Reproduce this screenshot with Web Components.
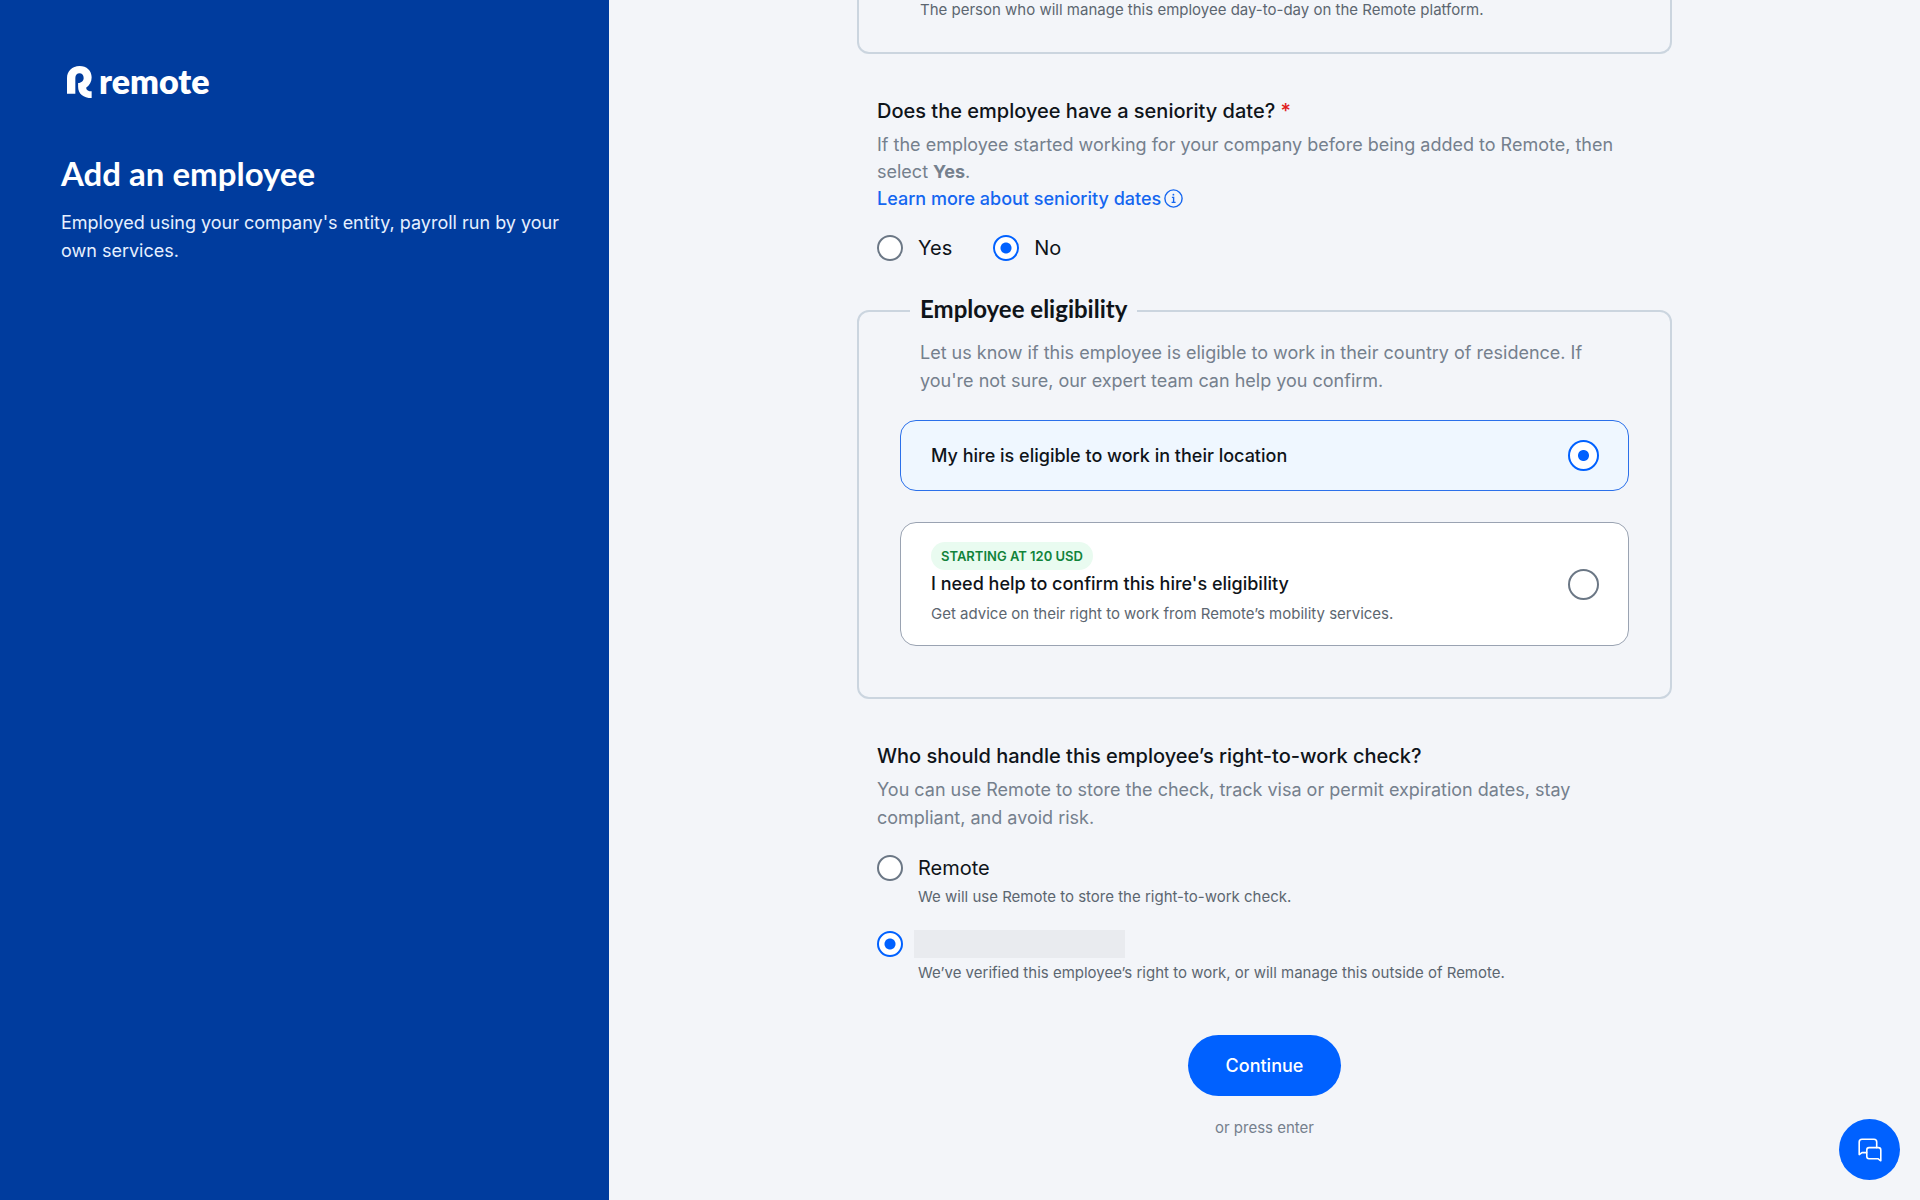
<!DOCTYPE html>
<html lang="en">
<head>
<meta charset="utf-8">
<meta name="viewport" content="width=device-width, initial-scale=1">
<title>Add an employee</title>
<style>
    body {
        margin: 0;
        background: #f3f5f9;
        color: #0f1419;
        font-family: Inter, "Liberation Sans", sans-serif;
        --brand: #0061ff;
        --navy: #003c9e;
        --muted: #75808d;
        --help: #5c6670;
        --line: #cbd5df;
    }
</style>
</head>
<body>
<app-shell>
    <side-intro slot="side" heading="Add an employee">
        Employed using your company's entity, payroll run by your own services.
    </side-intro>

    <form-section continued>
        <help-text inset>The person who will manage this employee day-to-day on the Remote platform.</help-text>
    </form-section>

    <form-question heading="Does the employee have a seniority date?" required>
        <span slot="description">If the employee started working for your company before being added to Remote, then select <b>Yes</b>.</span>
        <info-link slot="link" href="#seniority">Learn more about seniority dates</info-link>
        <radio-set inline>
            <radio-option name="seniority" value="yes" label="Yes"></radio-option>
            <radio-option name="seniority" value="no" label="No" checked></radio-option>
        </radio-set>
    </form-question>

    <form-section heading="Employee eligibility">
        <span slot="description">Let us know if this employee is eligible to work in their country of residence. If you're not sure, our expert team can help you confirm.</span>
        <radio-set cards>
            <option-card name="eligibility" value="eligible" label="My hire is eligible to work in their location" checked></option-card>
            <option-card name="eligibility" value="help" label="I need help to confirm this hire's eligibility" badge="STARTING AT 120 USD">Get advice on their right to work from Remote’s mobility services.</option-card>
        </radio-set>
    </form-section>

    <form-question heading="Who should handle this employee’s right-to-work check?" roomy>
        <span slot="description">You can use Remote to store the check, track visa or permit expiration dates, stay compliant, and avoid risk.</span>
        <radio-set>
            <radio-option name="check" value="remote" label="Remote">We will use Remote to store the right-to-work check.</radio-option>
            <radio-option name="check" value="company" checked>We’ve verified this employee’s right to work, or will manage this outside of Remote.</radio-option>
        </radio-set>
    </form-question>

    <form-submit slot="footer" hint="or press enter">Continue</form-submit>
</app-shell>
<chat-launcher></chat-launcher>

<script>
class AppShell extends HTMLElement {
    constructor() {
        super();
        this.attachShadow({ mode: 'open' }).innerHTML = `
            <style>
                :host {
                    display: grid;
                    grid-template-columns: minmax(0, 609fr) minmax(0, 1311fr);
                    min-height: 100vh;
                }
                main {
                    display: flex;
                    justify-content: center;
                }
                form {
                    display: flex;
                    flex-direction: column;
                    width: 100%;
                    max-width: 815px;
                }
            </style>
            <slot name="side"></slot>
            <main>
                <form>
                    <slot></slot>
                    <slot name="footer"></slot>
                </form>
            </main>
        `;
    }
}

class RemoteLogo extends HTMLElement {
    constructor() {
        super();
        this.attachShadow({ mode: 'open' }).innerHTML = `
            <style>
                :host {
                    display: flex;
                    align-items: flex-start;
                    gap: 7px;
                    font: 800 34px/30px Lato, sans-serif;
                }
                svg {
                    display: block;
                    fill: currentColor;
                }
            </style>
            <svg width="25" height="32" viewBox="0 0 72 96" preserveAspectRatio="none" aria-hidden="true">
                <path d="M0 83V36C0 15 15 0 36 0S71 14 71 34C71 48 65 58 55 65C56 73 62 76 71 76V96C47 96 32 83 32 62V51C42 51 48 44 48 36C48 28 43 22 36 22S24 28 24 36V83Z"/>
            </svg>
            <span>remote</span>
        `;
    }
}

class SideIntro extends HTMLElement {
    constructor() {
        super();
        this.$shadow = this.attachShadow({ mode: 'open' });
    }

    connectedCallback() {
        this.$shadow.innerHTML = `
            <style>
                :host {
                    display: block;
                    background: var(--navy);
                    color: #fff;
                    padding: 66px 40px 0 61px;
                }
                remote-logo {
                    padding-left: 6px;
                }
                h1 {
                    margin: 55px 0 16px;
                    font: 700 33px/40px Lato, sans-serif;
                }
                p {
                    margin: 0;
                    font-size: 18px;
                    line-height: 28px;
                    color: #e6f0ff;
                }
            </style>
            <remote-logo></remote-logo>
            <h1>${this.getAttribute('heading')}</h1>
            <p><slot></slot></p>
        `;
    }
}

class HelpText extends HTMLElement {
    constructor() {
        super();
        this.attachShadow({ mode: 'open' }).innerHTML = `
            <style>
                :host {
                    display: block;
                    color: var(--help);
                    font-size: 15px;
                    line-height: 24px;
                }
                :host([inset]) {
                    padding: 0 20px;
                    line-height: 20px;
                }
            </style>
            <slot></slot>
        `;
    }
}

class FormSection extends HTMLElement {
    constructor() {
        super();
        this.$shadow = this.attachShadow({ mode: 'open' });
    }

    connectedCallback() {
        const heading = this.getAttribute('heading');
        this.$shadow.innerHTML = `
            <style>
                :host {
                    display: block;
                }
                fieldset {
                    margin: 0;
                    min-width: 0;
                    border: 2px solid var(--line);
                    border-radius: 12px;
                    padding: 14px 41px 51px;
                }
                :host([continued]) fieldset {
                    border-top: 0;
                    border-radius: 0 0 12px 12px;
                    padding-top: 0;
                    padding-bottom: 32px;
                }
                legend {
                    margin-left: 10px;
                    padding: 0 10px 4px;
                    font: 700 24px/24px Lato, sans-serif;
                }
                p {
                    margin: 0 0 25px;
                    padding: 0 20px;
                    color: var(--muted);
                    font-size: 18px;
                    line-height: 28px;
                }
            </style>
            <fieldset>
                ${heading ? `<legend>${heading}</legend><p><slot name="description"></slot></p>` : ''}
                <slot></slot>
            </fieldset>
        `;
    }
}

class FormQuestion extends HTMLElement {
    constructor() {
        super();
        this.$shadow = this.attachShadow({ mode: 'open' });
    }

    connectedCallback() {
        this.$shadow.innerHTML = `
            <style>
                :host {
                    display: block;
                    padding: 43px 20px 36px;
                }
                h2 {
                    margin: 0;
                    font-size: 20px;
                    font-weight: 500;
                    line-height: 28px;
                }
                .star {
                    color: #e02020;
                }
                .about {
                    margin: 6px 0 23px;
                    color: var(--muted);
                    font-size: 18px;
                    line-height: 27px;
                }
                :host([roomy]) .about {
                    line-height: 28px;
                }
                ::slotted([slot="description"]) {
                    display: block;
                }
            </style>
            <section role="group" aria-labelledby="title">
                <h2 id="title">${this.getAttribute('heading')}${this.hasAttribute('required') ? ' <span class="star">*</span>' : ''}</h2>
                <div class="about">
                    <slot name="description"></slot>
                    <slot name="link"></slot>
                </div>
                <slot></slot>
            </section>
        `;
    }
}

class InfoLink extends HTMLElement {
    constructor() {
        super();
        this.$shadow = this.attachShadow({ mode: 'open' });
    }

    connectedCallback() {
        this.$shadow.innerHTML = `
            <style>
                :host {
                    display: flex;
                }
                a {
                    display: flex;
                    align-items: center;
                    gap: 3px;
                    color: #1466f0;
                    font-weight: 500;
                    text-decoration: none;
                }
                a:hover {
                    text-decoration: underline;
                }
            </style>
            <a href="${this.getAttribute('href')}">
                <slot></slot>
                <svg width="19" height="19" viewBox="0 0 19 19" fill="none" stroke="currentColor" stroke-width="1.4" aria-hidden="true">
                    <circle cx="9.5" cy="9.5" r="8.6"/>
                    <path d="M7.9 8.4h1.7v4.9M7.6 13.4h4"/>
                    <circle cx="9.4" cy="5.7" r=".9" fill="currentColor" stroke="none"/>
                </svg>
            </a>
        `;
    }
}

// Radios in separate shadow roots do not form a native group,
// so the set clears the others when one is picked.
class RadioSet extends HTMLElement {
    constructor() {
        super();
        this.attachShadow({ mode: 'open' }).innerHTML = `
            <style>
                :host {
                    display: flex;
                    flex-direction: column;
                    gap: 22px;
                }
                :host([inline]) {
                    flex-direction: row;
                    gap: 41px;
                }
                :host([cards]) {
                    gap: 31px;
                }
            </style>
            <slot></slot>
        `;
        this.addEventListener('pick', (event) => {
            for (const item of this.children) {
                item.checked = item === event.target;
            }
        });
    }
}

const radioStyle = `
    input {
        appearance: none;
        flex: none;
        box-sizing: border-box;
        width: var(--size, 26px);
        height: var(--size, 26px);
        margin: 0;
        border: 2px solid #6b7785;
        border-radius: 50%;
        background: #fff;
    }
    input:checked {
        border-color: var(--brand);
        background: radial-gradient(circle, var(--brand) 5px, #fff 6px);
    }
`;

class RadioItem extends HTMLElement {
    constructor() {
        super();
        this.$shadow = this.attachShadow({ mode: 'open' });
    }

    connectedCallback() {
        this.render();
        this.$input = this.$shadow.querySelector('input');
        this.$input.addEventListener('change', () => {
            this.dispatchEvent(new CustomEvent('pick', { bubbles: true }));
        });
    }

    set checked(value) {
        this.$input.checked = value;
        this.toggleAttribute('checked', value);
    }

    input() {
        return `<input type="radio" id="radio" name="${this.getAttribute('name')}" value="${this.getAttribute('value')}"${this.hasAttribute('checked') ? ' checked' : ''}>`;
    }
}

class RadioOption extends RadioItem {
    render() {
        const label = this.getAttribute('label');
        const help = this.textContent.trim();
        this.$shadow.innerHTML = `
            <style>
                ${radioStyle}
                :host {
                    display: block;
                }
                .row {
                    display: flex;
                    align-items: center;
                    gap: 15px;
                }
                label {
                    font-size: 20px;
                    line-height: 26px;
                }
                .blank {
                    width: 211px;
                    height: 28px;
                    margin: -1px 0 -1px -4px;
                    background: #e9ebef;
                }
                help-text {
                    margin: 4px 0 0 41px;
                }
            </style>
            <div class="row">
                ${this.input()}
                <label for="radio"${label ? '' : ' class="blank" aria-label="Your company"'}>${label || ''}</label>
            </div>
            ${help ? '<help-text><slot></slot></help-text>' : ''}
        `;
    }
}

class OptionCard extends RadioItem {
    render() {
        const badge = this.getAttribute('badge');
        const help = this.textContent.trim();
        this.$shadow.innerHTML = `
            <style>
                ${radioStyle}
                :host {
                    display: block;
                    --size: 31px;
                }
                label {
                    display: flex;
                    align-items: center;
                    justify-content: space-between;
                    gap: 20px;
                    padding: 19px 29px 19px 30px;
                    border: 1px solid #9aa3b2;
                    border-radius: 16px;
                    background: #fff;
                }
                :host([checked]) label {
                    border-color: #2b70ea;
                    background: #eff7ff;
                }
                .text {
                    display: flex;
                    flex-direction: column;
                    align-items: flex-start;
                }
                .badge {
                    padding: 0 10px;
                    border-radius: 14px;
                    background: #e9fbf0;
                    color: #11833a;
                    font-size: 13px;
                    font-weight: 600;
                    line-height: 28px;
                }
                .title {
                    font-size: 18px;
                    font-weight: 500;
                    line-height: 28px;
                }
                help-text {
                    margin-top: 4px;
                }
            </style>
            <label for="radio">
                <span class="text">
                    ${badge ? `<span class="badge">${badge}</span>` : ''}
                    <span class="title">${this.getAttribute('label')}</span>
                    ${help ? '<help-text><slot></slot></help-text>' : ''}
                </span>
                ${this.input()}
            </label>
        `;
    }
}

class FormSubmit extends HTMLElement {
    constructor() {
        super();
        this.$shadow = this.attachShadow({ mode: 'open' });
    }

    connectedCallback() {
        this.$shadow.innerHTML = `
            <style>
                :host {
                    display: flex;
                    flex-direction: column;
                    align-items: center;
                    gap: 22px;
                    padding: 14px 20px 40px;
                }
                button {
                    padding: 16px 38px;
                    border: 0;
                    border-radius: 31px;
                    background: var(--brand);
                    color: #fff;
                    font: 500 18px/29px Inter, sans-serif;
                    cursor: pointer;
                }
                span {
                    color: var(--muted);
                    font-size: 15px;
                    line-height: 20px;
                }
            </style>
            <button type="submit"><slot></slot></button>
            <span>${this.getAttribute('hint')}</span>
        `;
    }
}

class ChatLauncher extends HTMLElement {
    constructor() {
        super();
        this.attachShadow({ mode: 'open' }).innerHTML = `
            <style>
                :host {
                    position: fixed;
                    right: 20px;
                    bottom: 20px;
                }
                button {
                    display: grid;
                    place-items: center;
                    width: 61px;
                    height: 61px;
                    padding: 0;
                    border: 0;
                    border-radius: 50%;
                    background: var(--brand);
                    color: #fff;
                    cursor: pointer;
                }
            </style>
            <button type="button" aria-label="Open chat">
                <svg width="24" height="24" viewBox="0 0 24 24" fill="none" stroke="currentColor" stroke-width="1.6" stroke-linejoin="round" stroke-linecap="round" aria-hidden="true">
                    <path d="M18.7 9.6V4Q18.7 1.2 16 1.2H4Q1.2 1.2 1.2 4V16.6L4 14.6H8.6"/>
                    <path d="M11 9.6H20.4Q22.8 9.6 22.8 12V22.8L20.2 20.8H11Q8.8 20.8 8.8 18.6V12Q8.8 9.6 11 9.6Z"/>
                </svg>
            </button>
        `;
    }
}

window.customElements.define('help-text', HelpText);
window.customElements.define('remote-logo', RemoteLogo);
window.customElements.define('side-intro', SideIntro);
window.customElements.define('form-section', FormSection);
window.customElements.define('form-question', FormQuestion);
window.customElements.define('info-link', InfoLink);
window.customElements.define('radio-set', RadioSet);
window.customElements.define('radio-option', RadioOption);
window.customElements.define('option-card', OptionCard);
window.customElements.define('form-submit', FormSubmit);
window.customElements.define('chat-launcher', ChatLauncher);
window.customElements.define('app-shell', AppShell);
</script>
</body>
</html>
